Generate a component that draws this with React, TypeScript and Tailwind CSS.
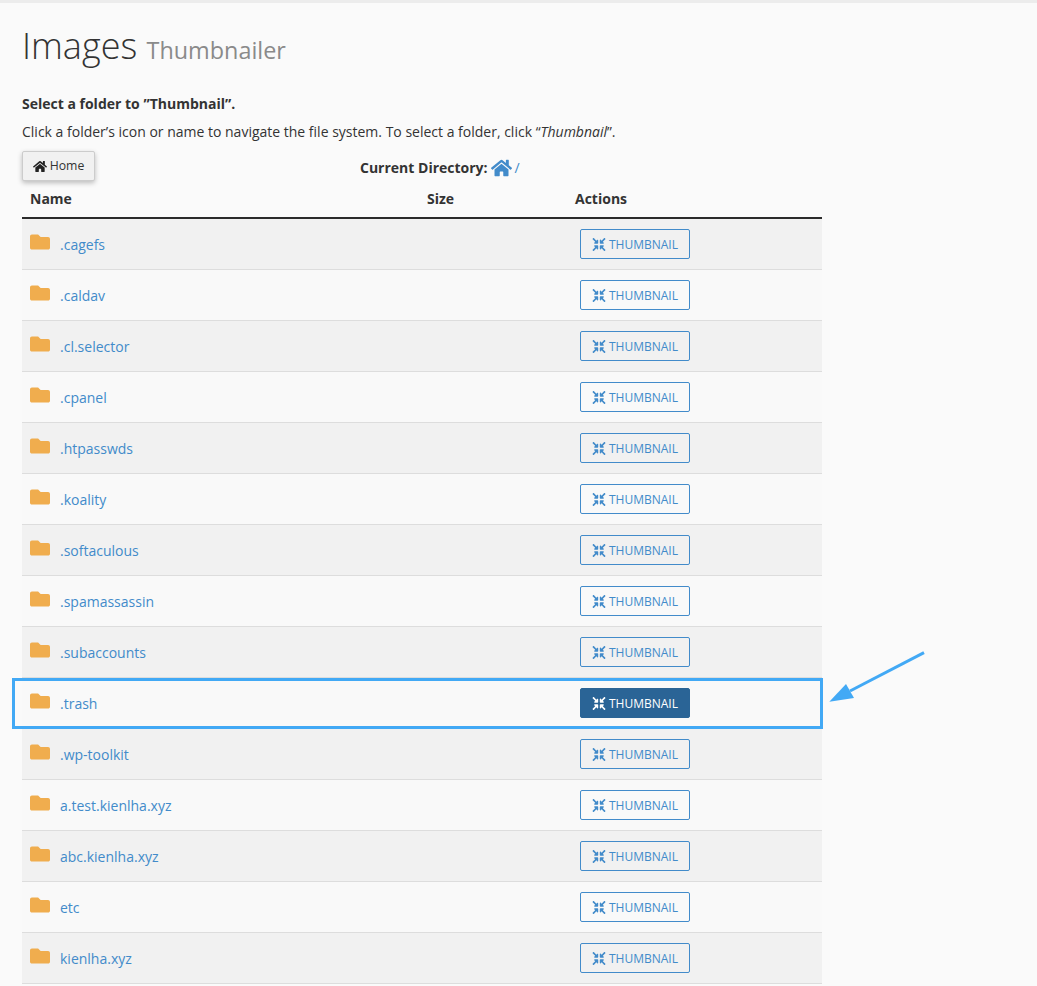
import { FaCompressArrowsAlt, FaFolder, FaHome } from 'react-icons/fa'

const folders = [
  '.cagefs',
  '.caldav',
  '.cl.selector',
  '.cpanel',
  '.htpasswds',
  '.koality',
  '.softaculous',
  '.spamassassin',
  '.subaccounts',
  '.trash',
  '.wp-toolkit',
  'a.test.kienlha.xyz',
  'abc.kienlha.xyz',
  'etc',
  'kienlha.xyz',
]

export default function App() {
  return (
    <div className="relative h-[986px] overflow-hidden bg-[#fafafa] font-['Open_Sans',sans-serif] text-sm text-[#333]">
      <div className="h-[3px] bg-[#ececec]" />
      <div className="px-[22px]">
        <h1 className="mt-[20px] text-[36px] leading-[46px] font-light text-[#333]">
          Images <small className="text-[23.4px] font-normal text-[#8a8a8a]">Thumbnailer</small>
        </h1>
        <p className="mt-[21px] leading-5 font-bold">Select a folder to ”Thumbnail”.</p>
        <p className="mt-[8px] leading-5">
          Click a folder’s icon or name to navigate the file system. To select a folder, click “<em>Thumbnail</em>”.
        </p>
        <div className="relative mt-[9px] h-[30px] w-[800px]">
          <button className="flex h-[30px] w-[73px] items-center justify-center gap-[3px] rounded-[2px] border border-[#ccc] bg-[#f1f1f1] text-[12.25px] text-[#333] shadow-[0_2px_5px_rgba(0,0,0,0.25)]">
            <FaHome className="h-[13px] w-[14px] text-[#222]" />
            Home
          </button>
          <div className="absolute top-0 left-[338px] flex h-[30px] items-center gap-[3px] pt-[3px]">
            <span className="font-bold">Current Directory:</span>
            <FaHome className="h-[20px] w-[21px] text-[#428bca]" />
            <span className="text-[#428bca]">/</span>
          </div>
        </div>
        <table className="w-[800px] table-fixed border-collapse">
          <thead>
            <tr className="h-[37px] border-b-2 border-[#2b2b2b] text-left font-bold">
              <th className="w-[397px] pb-[1px] pl-2">Name</th>
              <th className="w-[148px] pb-[1px] pl-2">Size</th>
              <th className="pb-[1px] pl-2">Actions</th>
            </tr>
          </thead>
          <tbody>
            {folders.map((name, i) => {
              const active = name === '.trash'
              return (
                <tr key={name} className={`h-[51px] border-b border-[#ddd] ${i % 2 === 0 ? 'bg-[#f1f1f1]' : 'bg-[#f9f9f9]'}`}>
                  <td className="pt-[2px] pl-2">
                    <div className="flex items-center">
                      <FaFolder className="mb-[6px] h-[20px] w-[20px] text-[#f0ad4e]" />
                      <a className="ml-[10px] text-[#428bca]">{name}</a>
                    </div>
                  </td>
                  <td />
                  <td className="pl-[13px]">
                    <button
                      className={`flex h-[30px] w-[110px] items-center justify-center gap-[3px] rounded-[2px] border pt-[2px] text-xs ${
                        active ? 'border-[#2a6496] bg-[#2a6496] text-white' : 'border-[#428bca] text-[#428bca]'
                      }`}
                    >
                      <FaCompressArrowsAlt className="h-[13px] w-[14px]" />
                      THUMBNAIL
                    </button>
                  </td>
                </tr>
              )
            })}
          </tbody>
        </table>
      </div>
      <div className="absolute top-[678px] left-[12px] h-[51px] w-[811px] border-[3px] border-[#42a9f5]" />
      <svg className="absolute top-[650px] left-[828px]" width="100" height="54" viewBox="0 0 100 54">
        <path d="M96 2.7 L22 41" stroke="#42a9f5" strokeWidth="3" fill="none" />
        <path d="M1.3 51.7 L26 48 L18 34 Z" fill="#42a9f5" />
      </svg>
    </div>
  )
}
